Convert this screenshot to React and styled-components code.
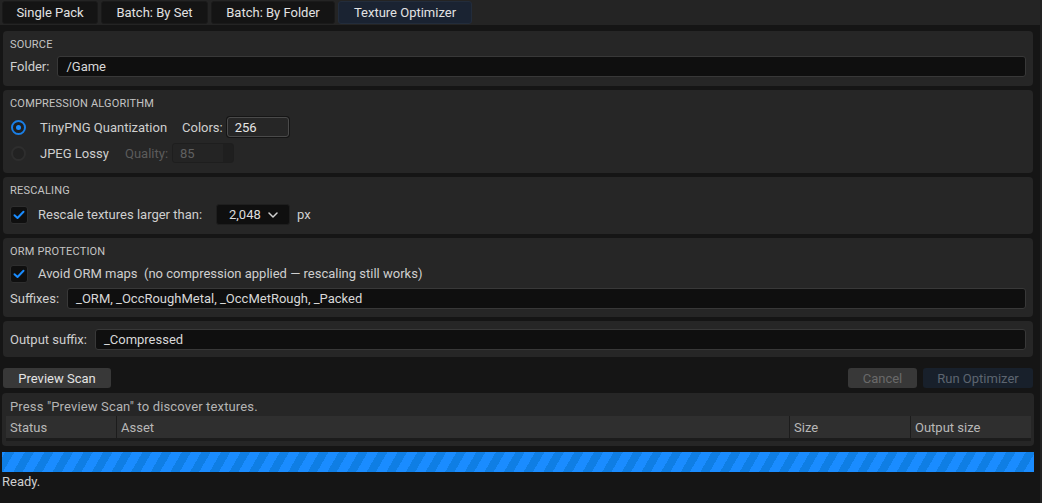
import styled, { createGlobalStyle } from 'styled-components';

const GlobalStyle = createGlobalStyle`
  html, body {
    margin: 0;
    padding: 0;
    background: #151515;
  }
  body {
    font-family: Roboto, "Liberation Sans", sans-serif;
    font-size: 13px;
    color: #d0d0d0;
  }
  * {
    box-sizing: border-box;
  }
`;

const tabs = ['Single Pack', 'Batch: By Set', 'Batch: By Folder', 'Texture Optimizer'];
const tabWidths = [96, 107, 124, 134];

const columns = [
  { name: 'Status', width: 111 },
  { name: 'Asset', width: 673 },
  { name: 'Size', width: 121 },
  { name: 'Output size', width: 120 },
];

const App = () => {
  return (
    <>
      <GlobalStyle />
      <Page>
        <TabBar>
          {tabs.map((t, i) => (
            <Tab key={t} $active={i === 3} $w={tabWidths[i]}>
              {t}
            </Tab>
          ))}
        </TabBar>

        <Body>
          <Panel $pad="7px 7px 9px" $gap={4}>
            <SectionTitle>Source</SectionTitle>
            <Row>
              <Label>Folder:</Label>
              <TextInput>/Game</TextInput>
            </Row>
          </Panel>

          <Panel $pad="7px 7px 10px" $gap={6}>
            <SectionTitle>Compression Algorithm</SectionTitle>
            <Row $h={20}>
              <Radio $checked />
              <OptionText $w={142}>TinyPNG Quantization</OptionText>
              <Label>Colors:</Label>
              <SpinBox>256</SpinBox>
            </Row>
            <Row $h={20}>
              <Radio />
              <OptionText $w={85}>JPEG Lossy</OptionText>
              <Label $disabled>Quality:</Label>
              <SpinBox $disabled>85</SpinBox>
            </Row>
          </Panel>

          <Panel $pad="7px 7px 9px" $gap={6}>
            <SectionTitle>Rescaling</SectionTitle>
            <Row>
              <Checkbox>
                <CheckMark />
              </Checkbox>
              <OptionText $w={178}>Rescale textures larger than:</OptionText>
              <Combo>
                2,048
                <Chevron />
              </Combo>
              <Label>px</Label>
            </Row>
          </Panel>

          <Panel $pad="7px 7px 8px" $gap={4}>
            <SectionTitle>ORM Protection</SectionTitle>
            <Row>
              <Checkbox>
                <CheckMark />
              </Checkbox>
              <OptionText>
                Avoid ORM maps&nbsp;&nbsp;(no compression applied — rescaling still works)
              </OptionText>
            </Row>
            <Row>
              <Label>Suffixes:</Label>
              <TextInput>_ORM, _OccRoughMetal, _OccMetRough, _Packed</TextInput>
            </Row>
          </Panel>

          <Panel $pad="8px 7px 7px">
            <Row>
              <Label>Output suffix:</Label>
              <TextInput>_Compressed</TextInput>
            </Row>
          </Panel>

          <ActionBar>
            <Button $w={108}>Preview Scan</Button>
            <Spacer />
            <Button $w={69} $disabled>
              Cancel
            </Button>
            <Button $w={110} $primary $disabled>
              Run Optimizer
            </Button>
          </ActionBar>

          <ResultsPanel>
            <Hint>Press "Preview Scan" to discover textures.</Hint>
            <TableHeader>
              {columns.map(c => (
                <HeaderCell key={c.name} $w={c.width}>
                  {c.name}
                </HeaderCell>
              ))}
            </TableHeader>
          </ResultsPanel>

          <ProgressBar />
          <Status>Ready.</Status>
        </Body>
      </Page>
    </>
  );
};

const CheckMark = () => (
  <svg width="12" height="10" viewBox="0 0 12 10">
    <path d="M1.5 5.2 L4.5 8 L10.5 1.8" fill="none" stroke="#1a8cff" strokeWidth="2" strokeLinecap="round" strokeLinejoin="round" />
  </svg>
);

const Chevron = () => (
  <svg width="10" height="6" viewBox="0 0 10 6">
    <path d="M1 1 L5 5 L9 1" fill="none" stroke="#d0d0d0" strokeWidth="1.5" strokeLinecap="round" strokeLinejoin="round" />
  </svg>
);

export default App;

const Page = styled.div`
  width: 1042px;
  height: 503px;
  display: flex;
  flex-direction: column;
  background: #151515;
  border-right: 2px solid #222;
`;

const TabBar = styled.div`
  height: 25px;
  display: flex;
  gap: 3px;
  padding: 1px 0 1px 2px;
  background: #242424;
  margin-bottom: 6px;
`;

const Tab = styled.div`
  width: ${p => p.$w}px;
  height: 23px;
  display: flex;
  align-items: center;
  justify-content: center;
  border-radius: 3px;
  font-size: 13px;
  color: #e2e2e2;
  background: ${p => (p.$active ? '#1a2332' : '#141414')};
  border: 1px solid ${p => (p.$active ? '#222c3b' : '#1a1a1a')};
`;

const Body = styled.div`
  display: flex;
  flex-direction: column;
  padding: 0 6px 0 2px;
`;

const Panel = styled.div`
  margin: 0 1px 4px 1px;
  background: #262626;
  border-radius: 4px;
  padding: ${p => p.$pad || '7px 7px 9px'};
  display: flex;
  flex-direction: column;
  gap: ${p => p.$gap ?? 4}px;
`;

const SectionTitle = styled.div`
  font-size: 11px;
  text-transform: uppercase;
  color: #c4c4c4;
  letter-spacing: 0.2px;
  line-height: 14px;
`;

const Row = styled.div`
  display: flex;
  align-items: center;
  height: ${p => p.$h ?? 21}px;
`;

const Label = styled.span`
  color: ${p => (p.$disabled ? '#5c5c5c' : '#cfcfcf')};
  margin-right: 8px;
  white-space: nowrap;
`;

const OptionText = styled.span`
  color: #cfcfcf;
  white-space: nowrap;
  width: ${p => (p.$w ? `${p.$w}px` : 'auto')};
`;

const TextInput = styled.div`
  flex: 1;
  height: 21px;
  background: #0f0f0f;
  border: 1px solid #383838;
  border-radius: 3px;
  padding: 0 8px;
  display: flex;
  align-items: center;
  color: #d8d8d8;
`;

const Radio = styled.span`
  width: 15px;
  height: 15px;
  margin: 0 14px 0 1px;
  border-radius: 50%;
  border: 2px solid ${p => (p.$checked ? '#1a7fe6' : '#2e2e2e')};
  background: ${p => (p.$checked ? '#1f1f1f' : '#222')};
  display: flex;
  align-items: center;
  justify-content: center;
  &::after {
    content: '';
    display: ${p => (p.$checked ? 'block' : 'none')};
    width: 5px;
    height: 5px;
    border-radius: 50%;
    background: #1a8cff;
  }
`;

const Checkbox = styled.span`
  width: 18px;
  height: 18px;
  margin-right: 10px;
  border-radius: 3px;
  background: #0f0f0f;
  border: 1px solid #2e2e2e;
  display: flex;
  align-items: center;
  justify-content: center;
`;

const SpinBox = styled.div`
  width: 62px;
  height: 20px;
  border-radius: 3px;
  padding: 0 7px;
  display: flex;
  align-items: center;
  margin-left: -4px;
  color: ${p => (p.$disabled ? '#606060' : '#e6e6e6')};
  background: ${p =>
    p.$disabled ? 'linear-gradient(to right, #242424 0 50px, #1f1f1f 50px)' : '#262626'};
  border: 1px solid ${p => (p.$disabled ? '#1e1e1e' : '#4a4a4a')};
  box-shadow: ${p => (p.$disabled ? 'none' : '0 0 0 1px #151515')};
`;

const Combo = styled.div`
  width: 74px;
  height: 21px;
  margin-right: 7px;
  border-radius: 3px;
  background: #0f0f0f;
  border: 1px solid #1e1e1e;
  display: flex;
  align-items: center;
  justify-content: space-between;
  padding: 0 11px 0 12px;
  color: #dedede;
`;

const ActionBar = styled.div`
  display: flex;
  align-items: center;
  gap: 6px;
  margin: 7px 1px 5px 1px;
  height: 20px;
`;

const Spacer = styled.div`
  flex: 1;
`;

const Button = styled.div`
  width: ${p => p.$w}px;
  height: 20px;
  border-radius: 3px;
  display: flex;
  align-items: center;
  justify-content: center;
  background: ${p => (p.$primary ? '#18202b' : '#383838')};
  color: ${p => (p.$disabled ? (p.$primary ? '#5d6570' : '#6a6a6a') : '#e4e4e4')};
`;

const ResultsPanel = styled.div`
  background: #262626;
  border-radius: 4px;
  padding: 5px 3px 5px 4px;
  display: flex;
  flex-direction: column;
  gap: 1px;
`;

const Hint = styled.div`
  color: #b4b4b4;
  padding-left: 4px;
  line-height: 17px;
  letter-spacing: 0.15px;
`;

const TableHeader = styled.div`
  display: flex;
  height: 25px;
  background: #2f2f2f;
  border-bottom: 3px solid #1c1c1c;
`;

const HeaderCell = styled.div`
  width: ${p => p.$w}px;
  display: flex;
  align-items: center;
  padding-left: 4px;
  color: #b8b8b8;
  border-right: 1px solid #1c1c1c;
  &:last-child {
    border-right: none;
  }
`;

const ProgressBar = styled.div`
  height: 20px;
  margin-top: 6px;
  background: repeating-linear-gradient(
    -60deg,
    #1a8cff 0 9px,
    #0f7ee4 9px 17px
  );
`;

const Status = styled.div`
  color: #cfcfcf;
  line-height: 20px;
`;
